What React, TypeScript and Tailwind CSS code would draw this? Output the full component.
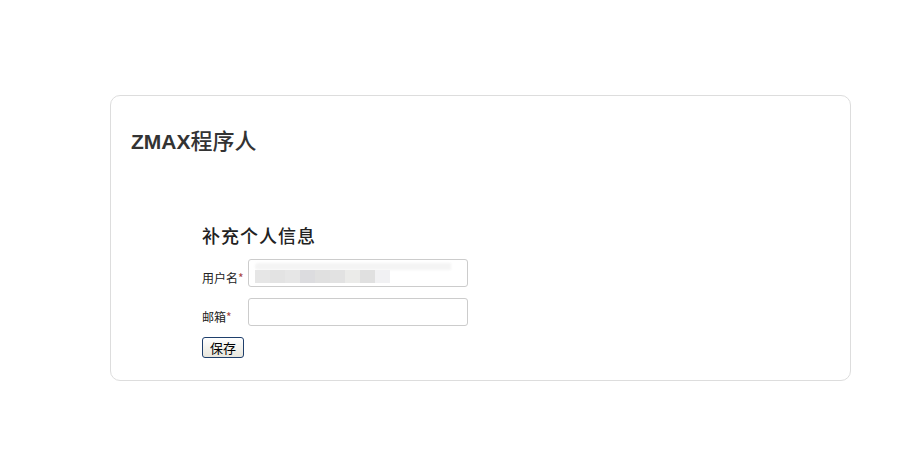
import React from "react";

const blocks = ["#e6e6e6", "#e3e3e3", "#e6e6e6", "#dcdcdf", "#e0e0e0", "#e2e2e2", "#ebebe9", "#e0e0e0", "#f1f1f3"];

export default function App() {
  return (
    <div
      className="w-[897px] h-[471px] bg-white pt-[95px] pl-[110px]"
      style={{ fontFamily: '"Liberation Sans", Arial, "Noto Sans CJK SC", sans-serif' }}
    >
      <div className="w-[741px] h-[286px] border border-[#dddddd] rounded-[10px] bg-white">
        <h1 className="pl-[20px] pt-[28px] text-[21px] leading-[30px] font-bold text-[#333333]">
          ZMAX<span className="text-[22px] font-medium" style={{ fontFamily: '"Noto Sans CJK SC", sans-serif' }}>程序人</span>
        </h1>
        <div className="pl-[91px] pt-[66px]">
          <h2
            className="text-[18px] leading-[24px] tracking-[1px] text-[#222222] font-medium"
            style={{ fontFamily: '"Noto Sans CJK SC", sans-serif' }}
          >
            补充个人信息
          </h2>
          <div className="mt-[12px] flex items-end">
            <label className="w-[46px] text-[12px] leading-[16px] pb-[1px] text-[#222222]" style={{ fontFamily: '"Noto Sans CJK SC", sans-serif' }}>
              用户名<span className="text-[#a94442]">*</span>
            </label>
            <div className="relative w-[220px] h-[28px] border border-[#cccccc] rounded-[3px] bg-white overflow-hidden">
              <div className="absolute left-[6px] top-[3px] w-[196px] h-[7px] bg-[#f4f4f4] rounded-l-[4px] blur-[1px]" />
              <div className="absolute left-[6px] top-[10px] flex h-[13px] blur-[0.5px]">
                {blocks.map((c, i) => (
                  <div key={i} className="w-[15px] h-[13px]" style={{ backgroundColor: c }} />
                ))}
              </div>
            </div>
          </div>
          <div className="mt-[11px] flex items-end">
            <label className="w-[46px] text-[12px] leading-[16px] pb-[1px] text-[#222222]" style={{ fontFamily: '"Noto Sans CJK SC", sans-serif' }}>
              邮箱<span className="text-[#a94442]">*</span>
            </label>
            <div className="w-[220px] h-[28px] border border-[#cccccc] rounded-[3px] bg-white" />
          </div>
          <button
            className="mt-[11px] w-[42px] h-[21px] border border-[#1f3f6c] rounded-[3px] text-[13px] leading-[18px] text-black bg-gradient-to-b from-white to-[#e8e6dc]"
            style={{ fontFamily: '"Noto Sans CJK SC", sans-serif' }}
          >
            保存
          </button>
        </div>
      </div>
    </div>
  );
}
